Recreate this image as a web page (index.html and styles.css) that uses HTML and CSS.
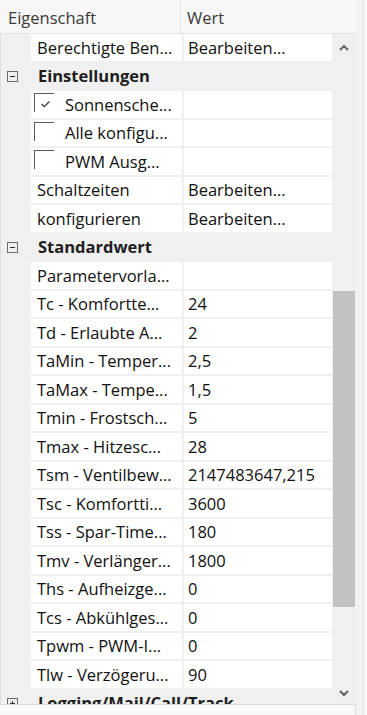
FILE: index.html
```html
<!DOCTYPE html>
<html lang="de">
<head>
<meta charset="utf-8">
<title>Eigenschaften</title>
<link rel="stylesheet" href="styles.css">
</head>
<body>
<div class="window">
  <div class="main">
    <div class="header">
      <div class="h-name">Eigenschaft</div>
      <div class="h-value">Wert</div>
    </div>
    <div class="body">
      <div class="rows">
        <div class="row"><div class="margin"></div><div class="cell name">Berechtigte Ben...</div><div class="cell value">Bearbeiten...</div></div>
        <div class="row cat"><div class="margin"><svg class="tog" width="11" height="11" viewBox="0 0 11 11"><rect x="0.5" y="0.5" width="10" height="10" fill="none" stroke="#6a6a6a"/><path d="M3 5.5h5" stroke="#2a2a2a"/></svg></div><div class="cat-label">Einstellungen</div></div>
        <div class="row"><div class="margin"></div><div class="cell name chk"><span class="box"><svg width="9" height="7" viewBox="0 0 9 7"><polyline points="0.6,3 3.2,5.6 8.4,0.5" fill="none" stroke="#333" stroke-width="1.2"/></svg></span>Sonnensche...</div><div class="cell value"></div></div>
        <div class="row"><div class="margin"></div><div class="cell name chk"><span class="box"></span>Alle konfigu...</div><div class="cell value"></div></div>
        <div class="row"><div class="margin"></div><div class="cell name chk"><span class="box"></span>PWM Ausg...</div><div class="cell value"></div></div>
        <div class="row"><div class="margin"></div><div class="cell name">Schaltzeiten</div><div class="cell value">Bearbeiten...</div></div>
        <div class="row"><div class="margin"></div><div class="cell name">konfigurieren</div><div class="cell value">Bearbeiten...</div></div>
        <div class="row cat"><div class="margin"><svg class="tog" width="11" height="11" viewBox="0 0 11 11"><rect x="0.5" y="0.5" width="10" height="10" fill="none" stroke="#6a6a6a"/><path d="M3 5.5h5" stroke="#2a2a2a"/></svg></div><div class="cat-label">Standardwert</div></div>
        <div class="row"><div class="margin"></div><div class="cell name">Parametervorla...</div><div class="cell value"></div></div>
        <div class="row"><div class="margin"></div><div class="cell name">Tc - Komfortte...</div><div class="cell value">24</div></div>
        <div class="row"><div class="margin"></div><div class="cell name">Td - Erlaubte A...</div><div class="cell value">2</div></div>
        <div class="row"><div class="margin"></div><div class="cell name">TaMin - Temper...</div><div class="cell value">2,5</div></div>
        <div class="row"><div class="margin"></div><div class="cell name">TaMax - Tempe...</div><div class="cell value">1,5</div></div>
        <div class="row"><div class="margin"></div><div class="cell name">Tmin - Frostsch...</div><div class="cell value">5</div></div>
        <div class="row"><div class="margin"></div><div class="cell name">Tmax - Hitzesc...</div><div class="cell value">28</div></div>
        <div class="row"><div class="margin"></div><div class="cell name">Tsm - Ventilbew...</div><div class="cell value">2147483647,215</div></div>
        <div class="row"><div class="margin"></div><div class="cell name">Tsc - Komfortti...</div><div class="cell value">3600</div></div>
        <div class="row"><div class="margin"></div><div class="cell name">Tss - Spar-Time...</div><div class="cell value">180</div></div>
        <div class="row"><div class="margin"></div><div class="cell name">Tmv - Verlänger...</div><div class="cell value">1800</div></div>
        <div class="row"><div class="margin"></div><div class="cell name">Ths - Aufheizge...</div><div class="cell value">0</div></div>
        <div class="row"><div class="margin"></div><div class="cell name">Tcs - Abkühlges...</div><div class="cell value">0</div></div>
        <div class="row"><div class="margin"></div><div class="cell name">Tpwm - PWM-I...</div><div class="cell value">0</div></div>
        <div class="row"><div class="margin"></div><div class="cell name">Tlw - Verzögeru...</div><div class="cell value">90</div></div>
        <div class="row cat"><div class="margin"><svg class="tog" width="11" height="11" viewBox="0 0 11 11"><rect x="0.5" y="0.5" width="10" height="10" fill="none" stroke="#6a6a6a"/><path d="M3 5.5h5M5.5 3v5" stroke="#2a2a2a"/></svg></div><div class="cat-label">Logging/Mail/Call/Track</div></div>
      </div>
      <div class="scroll">
        <div class="arrow"><svg width="10" height="7" viewBox="0 0 10 7"><polyline points="1,6 5,2 9,6" fill="none" stroke="#606060" stroke-width="2"/></svg></div>
        <div class="thumb"></div>
        <div class="spacer"></div>
        <div class="arrow down"><svg width="10" height="7" viewBox="0 0 10 7"><polyline points="1,1 5,5 9,1" fill="none" stroke="#606060" stroke-width="2"/></svg></div>
      </div>
    </div>
    <div class="footer"></div>
  </div>
  <div class="edge"></div>
</div>
</body>
</html>
```
FILE: styles.css
```css
html, body {
  margin: 0;
  padding: 0;
}
body {
  width: 367px;
  height: 715px;
  overflow: hidden;
  background: #f7f7f7;
  font-family: "Open Sans", "Noto Sans", sans-serif;
  font-size: 16.5px;
  color: #111;
}
.window {
  display: flex;
  height: 715px;
}
.main {
  width: 356px;
  display: flex;
  flex-direction: column;
}
.edge {
  width: 7px;
  background: #f2f2f2;
  border-right: 1px solid #e2e2e2;
}
.header {
  height: 33px;
  flex-shrink: 0;
  border-bottom: 1px solid #e4e4e4;
  background: #f7f7f7;
  display: flex;
  color: #3a3a3a;
}
.h-name {
  width: 181px;
  box-sizing: border-box;
  padding: 2px 0 0 8px;
  border-right: 1px solid #e4e4e4;
  display: flex;
  align-items: center;
}
.h-value {
  padding: 2px 0 0 6px;
  display: flex;
  align-items: center;
}
.body {
  height: 670px;
  flex-shrink: 0;
  display: flex;
  overflow: hidden;
  background: #f0f0f0;
}
.rows {
  width: 332px;
  box-sizing: border-box;
  border-left: 1px solid #dedede;
  display: flex;
  flex-direction: column;
  gap: 2px;
}
.row {
  display: grid;
  grid-template-columns: 28px 151px 149px;
  column-gap: 2px;
  height: 26.5px;
  flex-shrink: 0;
}
.margin {
  display: flex;
  align-items: center;
}
.tog {
  margin: 2px 0 0 6px;
}
.cell {
  background: #fff;
  display: flex;
  align-items: center;
  white-space: nowrap;
  overflow: hidden;
}
.name {
  padding-left: 6px;
}
.value {
  padding-left: 4px;
}
.chk {
  padding-left: 3px;
}
.box {
  width: 20px;
  height: 19px;
  box-sizing: border-box;
  border-top: 1px solid #5a5a5a;
  border-left: 1px solid #5a5a5a;
  margin-right: 11px;
  align-self: flex-start;
  margin-top: 2px;
  flex-shrink: 0;
  display: flex;
  align-items: flex-start;
}
.box svg {
  margin: 7px 0 0 6px;
}
.cat-label {
  grid-column: 2 / 4;
  font-weight: 700;
  color: #1e1e1e;
  padding-left: 7px;
  display: flex;
  align-items: center;
  white-space: nowrap;
}
.scroll {
  width: 24px;
  background: #f0f0f0;
  display: flex;
  flex-direction: column;
  align-items: center;
}
.arrow {
  height: 26px;
  display: flex;
  align-items: center;
  justify-content: center;
  flex-shrink: 0;
}
.arrow.down {
  height: 22px;
}
.thumb {
  width: 22px;
  height: 316px;
  margin-top: 231px;
  background: #c2c2c2;
  flex-shrink: 0;
}
.spacer {
  flex: 1;
}
.footer {
  height: 10px;
  border-top: 1px solid #dcdcdc;
  border-right: 1px solid #dcdcdc;
  background: #f8f8f8;
}
```
